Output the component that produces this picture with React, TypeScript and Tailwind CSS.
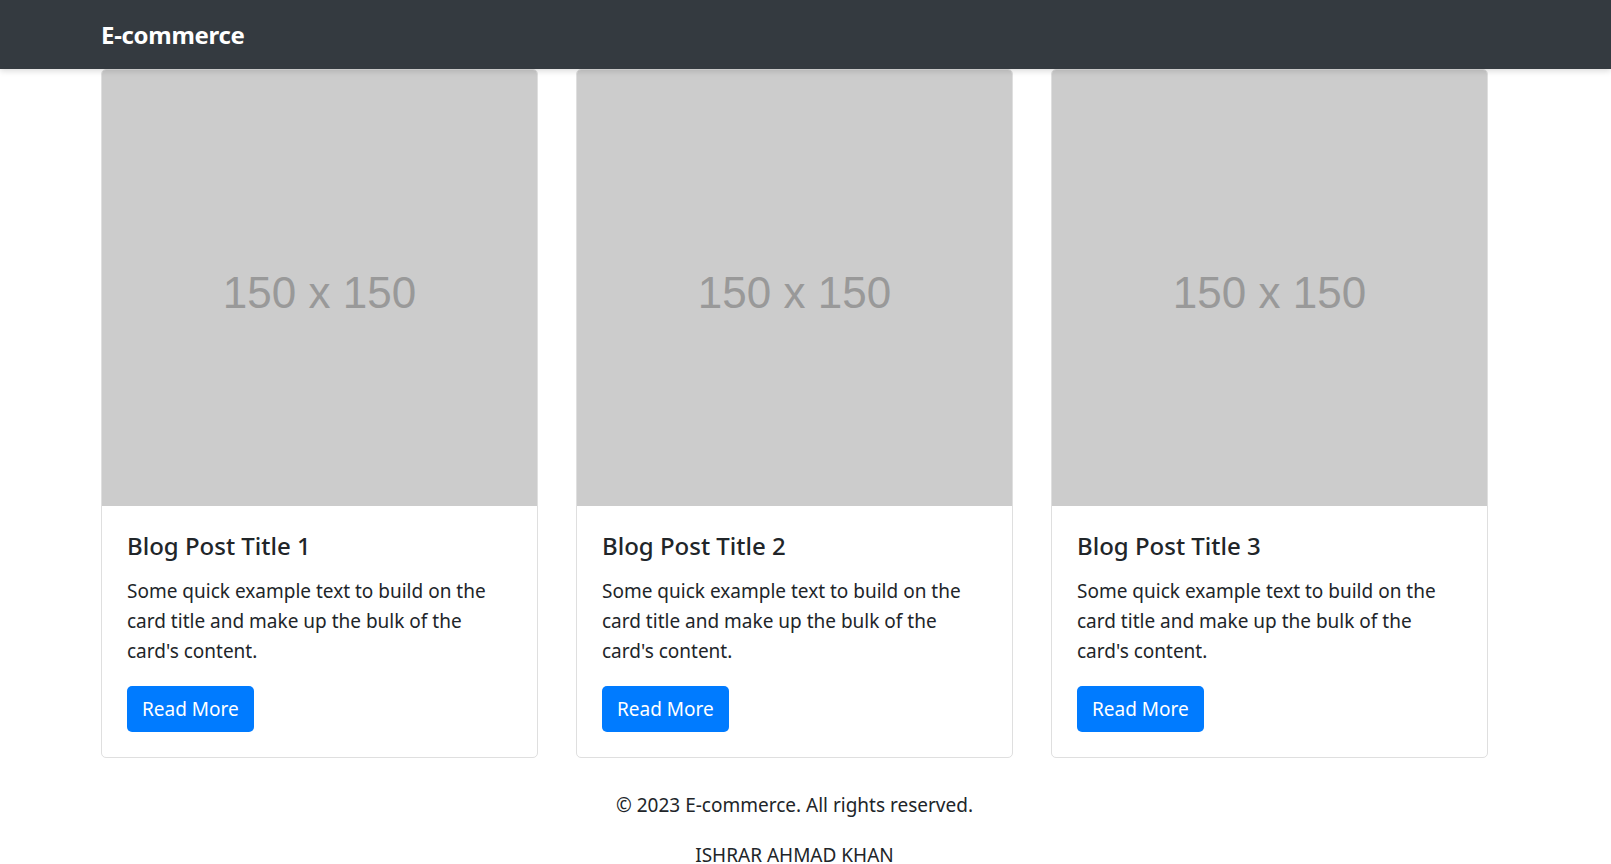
import React from 'react';

const posts = [1, 2, 3];

const BlogCard: React.FC<{ n: number }> = ({ n }) => {
  return (
    <div className="w-[437px] rounded-[5px] border border-[#dfdfdf] bg-white overflow-hidden">
      <div className="h-[436px] bg-[#cccccc] flex items-center justify-center">
        <span className="font-['Liberation_Sans',Arial,sans-serif] text-[44px] text-[#999999] mt-[10px]">
          150 x 150
        </span>
      </div>
      <div className="px-[25px] pt-[25px] pb-[25px]">
        <h5 className="text-[24px] leading-[30px] font-medium text-[#212529] mb-[15px]">
          Blog Post Title {n}
        </h5>
        <p className="text-[19px] leading-[30px] text-[#212529] mb-[20px] mt-[1px]">
          Some quick example text to build on the card title and make up the bulk of the card's content.
        </p>
        <button className="bg-[#007bff] text-white text-[19px] leading-[30px] px-[15px] py-[8px] rounded-[5px]">
          Read More
        </button>
      </div>
    </div>
  );
};

const App: React.FC = () => {
  return (
    <div className="min-h-screen bg-white font-['Noto_Sans','Open_Sans',sans-serif] text-[#212529]">
      <nav className="relative z-10 h-[69px] bg-[#343a40] shadow-[0_2px_6px_rgba(0,0,0,0.15)] flex items-center pl-[101px]">
        <span className="text-white text-[24px] font-bold tracking-[-0.3px]">E-commerce</span>
      </nav>

      <main className="pl-[101px] flex gap-[38px]">
        {posts.map((n) => (
          <BlogCard key={n} n={n} />
        ))}
      </main>

      <footer className="mt-[32px] text-center text-[19px] leading-[30px] pr-[22px]">
        <p className="mb-[20px]">© 2023 E-commerce. All rights reserved.</p>
        <p className="mb-[20px]">ISHRAR AHMAD KHAN</p>
      </footer>
    </div>
  );
};

export default App;
